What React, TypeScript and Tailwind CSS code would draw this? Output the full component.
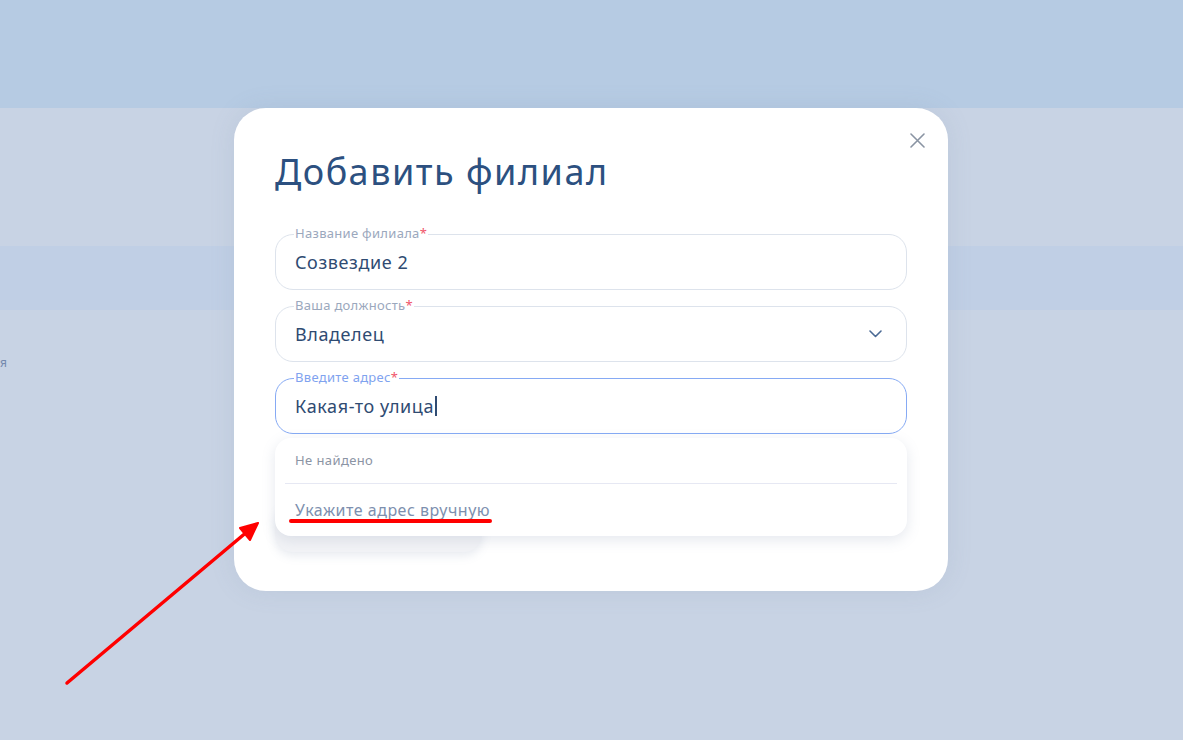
import React from "react";

const font = { fontFamily: '"Noto Sans", "Open Sans", sans-serif' };

// Поле с подписью на рамке
function Field({
  label,
  value,
  focused,
  caret,
  children,
}: {
  label: string;
  value: string;
  focused?: boolean;
  caret?: boolean;
  children?: React.ReactNode;
}) {
  return (
    <div
      className={`relative h-[56px] rounded-[18px] border flex items-center pl-[19px] pr-[24px] ${
        focused ? "border-[#86aaf4]" : "border-[#dde3ec]"
      }`}
    >
      <span
        className={`absolute left-[18px] top-[-10px] bg-white px-[1px] text-[13px] leading-[17px] tracking-[0.3px] ${
          focused ? "text-[#7fa3ef]" : "text-[#9ba8bd]"
        }`}
      >
        {label}
        <span className="text-[#f0556b]">*</span>
      </span>
      <span className="flex-1 flex items-center text-[18px] tracking-[0.6px] text-[#2f4b72]">
        {value}
        {caret && <span className="inline-block ml-[1px] w-[1.5px] h-[20px] bg-[#2f4b72]" />}
      </span>
      {children}
    </div>
  );
}

export default function App() {
  return (
    <div className="relative w-[1183px] h-[740px] overflow-hidden bg-[#c8d3e4]" style={font}>
      {/* фон страницы */}
      <div className="h-[108px] bg-[#b6cbe3]" />
      <div className="h-[138px] bg-[#c8d3e4]" />
      <div className="h-[64px] bg-[#c0cfe5]" />
      <div className="pt-[44px] text-[12px] text-[#7489ad]">я</div>

      {/* модальное окно */}
      <div className="absolute left-[234px] top-[108px] w-[714px] h-[483px] rounded-[32px] bg-white shadow-[0_0_24px_rgba(120,140,170,0.15)] pt-[42px] px-[41px]">
        <button className="absolute right-[23px] top-[24px] w-[16px] h-[16px] flex items-center justify-center">
          <svg width="15" height="15" viewBox="0 0 15 15" fill="none">
            <path d="M1 1L14 14M14 1L1 14" stroke="#8a94a3" strokeWidth="1.6" strokeLinecap="round" />
          </svg>
        </button>

        <h2 className="text-[36px] leading-[44px] text-[#2c5080] tracking-[1.5px]">Добавить филиал</h2>

        <div className="mt-[40px] flex flex-col gap-[16px]">
          <Field label="Название филиала" value="Созвездие 2" />
          <Field label="Ваша должность" value="Владелец">
            <svg width="13" height="8" viewBox="0 0 13 8" fill="none">
              <path d="M1 1L6.5 6.5L12 1" stroke="#4b6a95" strokeWidth="1.6" strokeLinecap="round" strokeLinejoin="round" />
            </svg>
          </Field>
          <div className="relative">
            <Field label="Введите адрес" value="Какая-то улица" focused caret />

            {/* выпадающий список */}
            <div className="absolute left-0 right-0 top-[60px] z-10 h-[98px] rounded-[16px] bg-white shadow-[0_4px_14px_rgba(110,125,160,0.18)]">
              <div className="h-[45px] flex items-center pl-[20px] text-[13px] tracking-[0.4px] text-[#8b94a4]">Не найдено</div>
              <div className="mx-[10px] h-px bg-[#e6e8f3]" />
              <div className="relative h-[52px] flex items-center pl-[20px] text-[16px] tracking-[0.5px] text-[#7d8fae]">
                Укажите адрес вручную
                <span className="absolute left-[14px] top-[35px] w-[203px] h-[4px] rounded-full bg-[#ff0000]" />
              </div>
            </div>
          </div>
        </div>

        <div className="mt-[68px] w-[207px] h-[50px] rounded-[18px] bg-[#f2f3f6] shadow-[0_4px_10px_rgba(110,125,160,0.15)]" />
      </div>

      {/* стрелка-указатель */}
      <svg className="absolute left-0 top-0 pointer-events-none" width="1183" height="740" viewBox="0 0 1183 740">
        <line x1="67" y1="683" x2="248" y2="531" stroke="#ff0000" strokeWidth="3.5" strokeLinecap="round" />
        <path d="M258 523L240 528L250 540Z" fill="#ff0000" stroke="#ff0000" strokeWidth="2" strokeLinejoin="round" />
      </svg>
    </div>
  );
}
